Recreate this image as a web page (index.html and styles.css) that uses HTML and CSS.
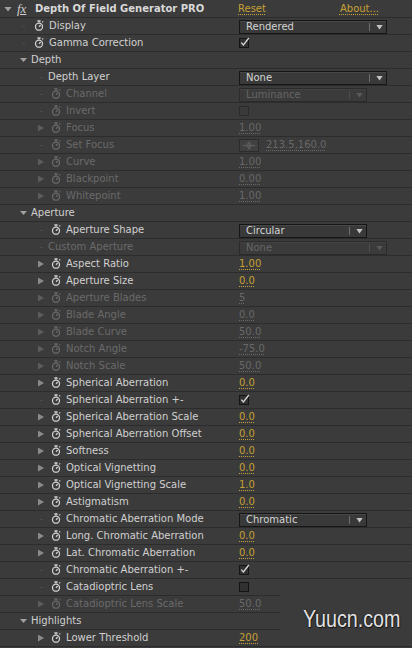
FILE: index.html
```html
<!DOCTYPE html>
<html>
<head>
<meta charset="utf-8">
<link rel="stylesheet" href="styles.css">
</head>
<body>
<div class="panel">
  <div class="row l0">
    <div class="name"><span class="tw"><i class="td"></i></span><span class="fx">fx</span><span class="title">Depth Of Field Generator PRO</span></div>
    <div class="val"><span class="link reset">Reset</span><span class="link about">About...</span></div>
  </div>
  <div class="row l1">
    <div class="name"><span class="tw"><i class="ds"></i></span><span class="sw"><svg class="ic" width="10" height="11" viewBox="0 0 10 11"><path d="M3.4 1h3.2M5 1v1.6M8.2 2.4l1-1"/><circle cx="5" cy="6.7" r="3.5"/><path d="M5 6.7l1.7-1.7"/></svg></span><span class="lbl">Display</span></div>
    <div class="val"><div class="dd"><span class="t">Rendered</span><i class="sep"></i><i class="arr"></i></div></div>
  </div>
  <div class="row l1">
    <div class="name"><span class="tw"><i class="ds"></i></span><span class="sw"><svg class="ic" width="10" height="11" viewBox="0 0 10 11"><path d="M3.4 1h3.2M5 1v1.6M8.2 2.4l1-1"/><circle cx="5" cy="6.7" r="3.5"/><path d="M5 6.7l1.7-1.7"/></svg></span><span class="lbl">Gamma Correction</span></div>
    <div class="val"><svg class="cb" width="12" height="12" viewBox="0 0 12 12"><rect x="0.5" y="1.5" width="9" height="9"/><path d="M2.3 5.6 4.4 8 9.8 1"/></svg></div>
  </div>
  <div class="row grp">
    <div class="name"><span class="tw"><i class="td"></i></span><span class="lbl">Depth</span></div>
    <div class="val"></div>
  </div>
  <div class="row l2">
    <div class="name"><span class="tw"><i class="ds"></i></span><span class="lbl nosw">Depth Layer</span></div>
    <div class="val"><div class="dd"><span class="t">None</span><i class="sep"></i><i class="arr"></i></div></div>
  </div>
  <div class="row l2 dis">
    <div class="name"><span class="tw"><i class="ds"></i></span><span class="sw"><svg class="ic" width="10" height="11" viewBox="0 0 10 11"><path d="M3.4 1h3.2M5 1v1.6M8.2 2.4l1-1"/><circle cx="5" cy="6.7" r="3.5"/><path d="M5 6.7l1.7-1.7"/></svg></span><span class="lbl">Channel</span></div>
    <div class="val"><div class="dd n"><span class="t">Luminance</span><i class="sep"></i><i class="arr"></i></div></div>
  </div>
  <div class="row l2 dis">
    <div class="name"><span class="tw"><i class="ds"></i></span><span class="sw"><svg class="ic" width="10" height="11" viewBox="0 0 10 11"><path d="M3.4 1h3.2M5 1v1.6M8.2 2.4l1-1"/><circle cx="5" cy="6.7" r="3.5"/><path d="M5 6.7l1.7-1.7"/></svg></span><span class="lbl">Invert</span></div>
    <div class="val"><svg class="cb" width="12" height="12" viewBox="0 0 12 12"><rect x="0.5" y="1.5" width="9" height="9"/></svg></div>
  </div>
  <div class="row l2 dis">
    <div class="name"><span class="tw"><i class="tr"></i></span><span class="sw"><svg class="ic" width="10" height="11" viewBox="0 0 10 11"><path d="M3.4 1h3.2M5 1v1.6M8.2 2.4l1-1"/><circle cx="5" cy="6.7" r="3.5"/><path d="M5 6.7l1.7-1.7"/></svg></span><span class="lbl">Focus</span></div>
    <div class="val"><span class="num">1.00</span></div>
  </div>
  <div class="row l2 dis">
    <div class="name"><span class="tw"><i class="ds"></i></span><span class="sw"><svg class="ic" width="10" height="11" viewBox="0 0 10 11"><path d="M3.4 1h3.2M5 1v1.6M8.2 2.4l1-1"/><circle cx="5" cy="6.7" r="3.5"/><path d="M5 6.7l1.7-1.7"/></svg></span><span class="lbl">Set Focus</span></div>
    <div class="val"><span class="xb"><svg width="12" height="9" viewBox="0 0 12 9"><path d="M0 4.5h12M6 0v9"/><circle cx="6" cy="4.5" r="2.3"/></svg></span><span class="num pt">213.5,160.0</span></div>
  </div>
  <div class="row l2 dis">
    <div class="name"><span class="tw"><i class="tr"></i></span><span class="sw"><svg class="ic" width="10" height="11" viewBox="0 0 10 11"><path d="M3.4 1h3.2M5 1v1.6M8.2 2.4l1-1"/><circle cx="5" cy="6.7" r="3.5"/><path d="M5 6.7l1.7-1.7"/></svg></span><span class="lbl">Curve</span></div>
    <div class="val"><span class="num">1.00</span></div>
  </div>
  <div class="row l2 dis">
    <div class="name"><span class="tw"><i class="tr"></i></span><span class="sw"><svg class="ic" width="10" height="11" viewBox="0 0 10 11"><path d="M3.4 1h3.2M5 1v1.6M8.2 2.4l1-1"/><circle cx="5" cy="6.7" r="3.5"/><path d="M5 6.7l1.7-1.7"/></svg></span><span class="lbl">Blackpoint</span></div>
    <div class="val"><span class="num">0.00</span></div>
  </div>
  <div class="row l2 dis">
    <div class="name"><span class="tw"><i class="tr"></i></span><span class="sw"><svg class="ic" width="10" height="11" viewBox="0 0 10 11"><path d="M3.4 1h3.2M5 1v1.6M8.2 2.4l1-1"/><circle cx="5" cy="6.7" r="3.5"/><path d="M5 6.7l1.7-1.7"/></svg></span><span class="lbl">Whitepoint</span></div>
    <div class="val"><span class="num">1.00</span></div>
  </div>
  <div class="row grp">
    <div class="name"><span class="tw"><i class="td"></i></span><span class="lbl">Aperture</span></div>
    <div class="val"></div>
  </div>
  <div class="row l2">
    <div class="name"><span class="tw"><i class="ds"></i></span><span class="sw"><svg class="ic" width="10" height="11" viewBox="0 0 10 11"><path d="M3.4 1h3.2M5 1v1.6M8.2 2.4l1-1"/><circle cx="5" cy="6.7" r="3.5"/><path d="M5 6.7l1.7-1.7"/></svg></span><span class="lbl">Aperture Shape</span></div>
    <div class="val"><div class="dd n"><span class="t">Circular</span><i class="sep"></i><i class="arr"></i></div></div>
  </div>
  <div class="row l2 dis">
    <div class="name"><span class="tw"><i class="ds"></i></span><span class="lbl nosw">Custom Aperture</span></div>
    <div class="val"><div class="dd"><span class="t">None</span><i class="sep"></i><i class="arr"></i></div></div>
  </div>
  <div class="row l2">
    <div class="name"><span class="tw"><i class="tr"></i></span><span class="sw"><svg class="ic" width="10" height="11" viewBox="0 0 10 11"><path d="M3.4 1h3.2M5 1v1.6M8.2 2.4l1-1"/><circle cx="5" cy="6.7" r="3.5"/><path d="M5 6.7l1.7-1.7"/></svg></span><span class="lbl">Aspect Ratio</span></div>
    <div class="val"><span class="num">1.00</span></div>
  </div>
  <div class="row l2">
    <div class="name"><span class="tw"><i class="tr"></i></span><span class="sw"><svg class="ic" width="10" height="11" viewBox="0 0 10 11"><path d="M3.4 1h3.2M5 1v1.6M8.2 2.4l1-1"/><circle cx="5" cy="6.7" r="3.5"/><path d="M5 6.7l1.7-1.7"/></svg></span><span class="lbl">Aperture Size</span></div>
    <div class="val"><span class="num">0.0</span></div>
  </div>
  <div class="row l2 dis">
    <div class="name"><span class="tw"><i class="tr"></i></span><span class="sw"><svg class="ic" width="10" height="11" viewBox="0 0 10 11"><path d="M3.4 1h3.2M5 1v1.6M8.2 2.4l1-1"/><circle cx="5" cy="6.7" r="3.5"/><path d="M5 6.7l1.7-1.7"/></svg></span><span class="lbl">Aperture Blades</span></div>
    <div class="val"><span class="num">5</span></div>
  </div>
  <div class="row l2 dis">
    <div class="name"><span class="tw"><i class="tr"></i></span><span class="sw"><svg class="ic" width="10" height="11" viewBox="0 0 10 11"><path d="M3.4 1h3.2M5 1v1.6M8.2 2.4l1-1"/><circle cx="5" cy="6.7" r="3.5"/><path d="M5 6.7l1.7-1.7"/></svg></span><span class="lbl">Blade Angle</span></div>
    <div class="val"><span class="num">0.0</span></div>
  </div>
  <div class="row l2 dis">
    <div class="name"><span class="tw"><i class="tr"></i></span><span class="sw"><svg class="ic" width="10" height="11" viewBox="0 0 10 11"><path d="M3.4 1h3.2M5 1v1.6M8.2 2.4l1-1"/><circle cx="5" cy="6.7" r="3.5"/><path d="M5 6.7l1.7-1.7"/></svg></span><span class="lbl">Blade Curve</span></div>
    <div class="val"><span class="num">50.0</span></div>
  </div>
  <div class="row l2 dis">
    <div class="name"><span class="tw"><i class="tr"></i></span><span class="sw"><svg class="ic" width="10" height="11" viewBox="0 0 10 11"><path d="M3.4 1h3.2M5 1v1.6M8.2 2.4l1-1"/><circle cx="5" cy="6.7" r="3.5"/><path d="M5 6.7l1.7-1.7"/></svg></span><span class="lbl">Notch Angle</span></div>
    <div class="val"><span class="num">-75.0</span></div>
  </div>
  <div class="row l2 dis">
    <div class="name"><span class="tw"><i class="tr"></i></span><span class="sw"><svg class="ic" width="10" height="11" viewBox="0 0 10 11"><path d="M3.4 1h3.2M5 1v1.6M8.2 2.4l1-1"/><circle cx="5" cy="6.7" r="3.5"/><path d="M5 6.7l1.7-1.7"/></svg></span><span class="lbl">Notch Scale</span></div>
    <div class="val"><span class="num">50.0</span></div>
  </div>
  <div class="row l2">
    <div class="name"><span class="tw"><i class="tr"></i></span><span class="sw"><svg class="ic" width="10" height="11" viewBox="0 0 10 11"><path d="M3.4 1h3.2M5 1v1.6M8.2 2.4l1-1"/><circle cx="5" cy="6.7" r="3.5"/><path d="M5 6.7l1.7-1.7"/></svg></span><span class="lbl">Spherical Aberration</span></div>
    <div class="val"><span class="num">0.0</span></div>
  </div>
  <div class="row l2">
    <div class="name"><span class="tw"><i class="ds"></i></span><span class="sw"><svg class="ic" width="10" height="11" viewBox="0 0 10 11"><path d="M3.4 1h3.2M5 1v1.6M8.2 2.4l1-1"/><circle cx="5" cy="6.7" r="3.5"/><path d="M5 6.7l1.7-1.7"/></svg></span><span class="lbl">Spherical Aberration +-</span></div>
    <div class="val"><svg class="cb" width="12" height="12" viewBox="0 0 12 12"><rect x="0.5" y="1.5" width="9" height="9"/><path d="M2.3 5.6 4.4 8 9.8 1"/></svg></div>
  </div>
  <div class="row l2">
    <div class="name"><span class="tw"><i class="tr"></i></span><span class="sw"><svg class="ic" width="10" height="11" viewBox="0 0 10 11"><path d="M3.4 1h3.2M5 1v1.6M8.2 2.4l1-1"/><circle cx="5" cy="6.7" r="3.5"/><path d="M5 6.7l1.7-1.7"/></svg></span><span class="lbl">Spherical Aberration Scale</span></div>
    <div class="val"><span class="num">0.0</span></div>
  </div>
  <div class="row l2">
    <div class="name"><span class="tw"><i class="tr"></i></span><span class="sw"><svg class="ic" width="10" height="11" viewBox="0 0 10 11"><path d="M3.4 1h3.2M5 1v1.6M8.2 2.4l1-1"/><circle cx="5" cy="6.7" r="3.5"/><path d="M5 6.7l1.7-1.7"/></svg></span><span class="lbl">Spherical Aberration Offset</span></div>
    <div class="val"><span class="num">0.0</span></div>
  </div>
  <div class="row l2">
    <div class="name"><span class="tw"><i class="tr"></i></span><span class="sw"><svg class="ic" width="10" height="11" viewBox="0 0 10 11"><path d="M3.4 1h3.2M5 1v1.6M8.2 2.4l1-1"/><circle cx="5" cy="6.7" r="3.5"/><path d="M5 6.7l1.7-1.7"/></svg></span><span class="lbl">Softness</span></div>
    <div class="val"><span class="num">0.0</span></div>
  </div>
  <div class="row l2">
    <div class="name"><span class="tw"><i class="tr"></i></span><span class="sw"><svg class="ic" width="10" height="11" viewBox="0 0 10 11"><path d="M3.4 1h3.2M5 1v1.6M8.2 2.4l1-1"/><circle cx="5" cy="6.7" r="3.5"/><path d="M5 6.7l1.7-1.7"/></svg></span><span class="lbl">Optical Vignetting</span></div>
    <div class="val"><span class="num">0.0</span></div>
  </div>
  <div class="row l2">
    <div class="name"><span class="tw"><i class="tr"></i></span><span class="sw"><svg class="ic" width="10" height="11" viewBox="0 0 10 11"><path d="M3.4 1h3.2M5 1v1.6M8.2 2.4l1-1"/><circle cx="5" cy="6.7" r="3.5"/><path d="M5 6.7l1.7-1.7"/></svg></span><span class="lbl">Optical Vignetting Scale</span></div>
    <div class="val"><span class="num">1.0</span></div>
  </div>
  <div class="row l2">
    <div class="name"><span class="tw"><i class="tr"></i></span><span class="sw"><svg class="ic" width="10" height="11" viewBox="0 0 10 11"><path d="M3.4 1h3.2M5 1v1.6M8.2 2.4l1-1"/><circle cx="5" cy="6.7" r="3.5"/><path d="M5 6.7l1.7-1.7"/></svg></span><span class="lbl">Astigmatism</span></div>
    <div class="val"><span class="num">0.0</span></div>
  </div>
  <div class="row l2">
    <div class="name"><span class="tw"><i class="ds"></i></span><span class="sw"><svg class="ic" width="10" height="11" viewBox="0 0 10 11"><path d="M3.4 1h3.2M5 1v1.6M8.2 2.4l1-1"/><circle cx="5" cy="6.7" r="3.5"/><path d="M5 6.7l1.7-1.7"/></svg></span><span class="lbl">Chromatic Aberration Mode</span></div>
    <div class="val"><div class="dd n"><span class="t">Chromatic</span><i class="sep"></i><i class="arr"></i></div></div>
  </div>
  <div class="row l2">
    <div class="name"><span class="tw"><i class="tr"></i></span><span class="sw"><svg class="ic" width="10" height="11" viewBox="0 0 10 11"><path d="M3.4 1h3.2M5 1v1.6M8.2 2.4l1-1"/><circle cx="5" cy="6.7" r="3.5"/><path d="M5 6.7l1.7-1.7"/></svg></span><span class="lbl">Long. Chromatic Aberration</span></div>
    <div class="val"><span class="num">0.0</span></div>
  </div>
  <div class="row l2">
    <div class="name"><span class="tw"><i class="tr"></i></span><span class="sw"><svg class="ic" width="10" height="11" viewBox="0 0 10 11"><path d="M3.4 1h3.2M5 1v1.6M8.2 2.4l1-1"/><circle cx="5" cy="6.7" r="3.5"/><path d="M5 6.7l1.7-1.7"/></svg></span><span class="lbl">Lat. Chromatic Aberration</span></div>
    <div class="val"><span class="num">0.0</span></div>
  </div>
  <div class="row l2">
    <div class="name"><span class="tw"><i class="ds"></i></span><span class="sw"><svg class="ic" width="10" height="11" viewBox="0 0 10 11"><path d="M3.4 1h3.2M5 1v1.6M8.2 2.4l1-1"/><circle cx="5" cy="6.7" r="3.5"/><path d="M5 6.7l1.7-1.7"/></svg></span><span class="lbl">Chromatic Aberration +-</span></div>
    <div class="val"><svg class="cb" width="12" height="12" viewBox="0 0 12 12"><rect x="0.5" y="1.5" width="9" height="9"/><path d="M2.3 5.6 4.4 8 9.8 1"/></svg></div>
  </div>
  <div class="row l2">
    <div class="name"><span class="tw"><i class="ds"></i></span><span class="sw"><svg class="ic" width="10" height="11" viewBox="0 0 10 11"><path d="M3.4 1h3.2M5 1v1.6M8.2 2.4l1-1"/><circle cx="5" cy="6.7" r="3.5"/><path d="M5 6.7l1.7-1.7"/></svg></span><span class="lbl">Catadioptric Lens</span></div>
    <div class="val"><svg class="cb" width="12" height="12" viewBox="0 0 12 12"><rect x="0.5" y="1.5" width="9" height="9"/></svg></div>
  </div>
  <div class="row l2 dis">
    <div class="name"><span class="tw"><i class="tr"></i></span><span class="sw"><svg class="ic" width="10" height="11" viewBox="0 0 10 11"><path d="M3.4 1h3.2M5 1v1.6M8.2 2.4l1-1"/><circle cx="5" cy="6.7" r="3.5"/><path d="M5 6.7l1.7-1.7"/></svg></span><span class="lbl">Catadioptric Lens Scale</span></div>
    <div class="val"><span class="num">50.0</span></div>
  </div>
  <div class="row grp">
    <div class="name"><span class="tw"><i class="td"></i></span><span class="lbl">Highlights</span></div>
    <div class="val"></div>
  </div>
  <div class="row l2">
    <div class="name"><span class="tw"><i class="tr"></i></span><span class="sw"><svg class="ic" width="10" height="11" viewBox="0 0 10 11"><path d="M3.4 1h3.2M5 1v1.6M8.2 2.4l1-1"/><circle cx="5" cy="6.7" r="3.5"/><path d="M5 6.7l1.7-1.7"/></svg></span><span class="lbl">Lower Threshold</span></div>
    <div class="val"><span class="num">200</span></div>
  </div>
</div>
<div class="wm"><span>Yuucn.com</span></div>
</body>
</html>
```

FILE: styles.css
```css
html, body {
  margin: 0;
  padding: 0;
}
body {
  background: #3b3b3b;
  font-family: "DejaVu Sans", "Noto Sans", sans-serif;
  font-size: 10px;
  color: #d0d0d0;
  width: 412px;
  height: 648px;
  overflow: hidden;
  position: relative;
}
.panel {
  display: flex;
  flex-direction: column;
  padding-top: 1px;
}
.row {
  display: grid;
  grid-template-columns: 239px 1fr;
  height: 17px;
  box-sizing: border-box;
  border-bottom: 1px solid #2c2c2c;
  line-height: 16px;
  white-space: nowrap;
}
.name {
  display: flex;
  align-items: center;
  height: 16px;
  overflow: hidden;
}
.val {
  display: flex;
  align-items: center;
  height: 16px;
}
.l0 .name { padding-left: 4px; }
.l1 .name { padding-left: 19px; }
.grp .name { padding-left: 19px; }
.l2 .name { padding-left: 36px; }

.tw {
  width: 14px;
  height: 16px;
  flex: none;
  display: flex;
  align-items: center;
}
.l0 .tw { width: 13px; }
.grp .tw { width: 12px; }

.tr {
  display: block;
  width: 6px;
  height: 7px;
  margin-left: 2px;
  background: #8a8a8a;
  clip-path: polygon(0 0, 100% 50%, 0 100%);
}
.td {
  display: block;
  width: 7px;
  height: 4px;
  margin-left: 1px;
  background: #a0a0a0;
  clip-path: polygon(0 0, 100% 0, 50% 100%);
}
.l0 .td { width: 8px; height: 5px; margin-left: 0; }
.ds {
  display: block;
  width: 3px;
  height: 1px;
  margin-left: 4px;
  background: #4b4b4b;
}
.l1 .ds { margin-left: 3px; }

.sw {
  width: 16px;
  flex: none;
  display: flex;
  align-items: center;
}
.ic {
  margin-left: 1px;
  margin-top: -2px;
  fill: none;
  stroke: currentColor;
  stroke-width: 1.3;
}
.lbl.nosw { margin-left: -2px; }

.fx {
  width: 18px;
  flex: none;
  font-family: "Liberation Serif", serif;
  font-style: italic;
  font-size: 13px;
  text-decoration: underline;
  color: #cfcfcf;
  line-height: 14px;
}
.title {
  font-weight: bold;
  color: #d8d8d8;
}
.link {
  color: #c6a034;
  text-decoration: underline dotted;
  text-underline-offset: 2px;
  line-height: 12px;
}
.reset { margin-left: -1px; }
.about { margin-left: 74px; }

.dis { color: #6a6a6a; }
.dis .tr { background: #5c5c5c; }

.num {
  color: #c6a034;
  text-decoration: underline dotted;
  text-underline-offset: 2px;
  line-height: 12px;
}
.dis .num { color: #686868; }

.dd {
  box-sizing: border-box;
  height: 14px;
  width: 148px;
  border: 1px solid #161616;
  background: #393939;
  box-shadow: inset 0 1px 0 #474747;
  display: flex;
  align-items: center;
  color: #d4d4d4;
  align-self: flex-start;
  margin-top: 2px;
}
.dd.n { width: 128px; }
.dd .t {
  flex: 1;
  padding-left: 6px;
  line-height: 12px;
}
.dd .sep {
  display: block;
  width: 1px;
  height: 8px;
  background: #6e6e6e;
}
.dd .arr {
  display: block;
  width: 7px;
  height: 5px;
  margin: 0 3px 0 6px;
  background: #c4c4c4;
  clip-path: polygon(0 0, 100% 0, 50% 100%);
}
.dis .dd {
  border-color: #2b2b2b;
  background: #3b3b3b;
  box-shadow: inset 0 1px 0 #424242;
  color: #666666;
}
.dis .dd .sep { background: #4e4e4e; }
.dis .dd .arr { background: #5a5a5a; }

.cb rect {
  fill: #313131;
  stroke: #141414;
}
.cb path {
  fill: none;
  stroke: #d6d6d6;
  stroke-width: 1.3;
}
.dis .cb rect {
  fill: #3a3a3a;
  stroke: #2b2b2b;
}

.xb {
  box-sizing: border-box;
  width: 20px;
  height: 13px;
  border: 1px solid #2b2b2b;
  background: #404040;
  display: flex;
  align-items: center;
  justify-content: center;
}
.xb svg {
  fill: none;
  stroke: #5e5e5e;
  stroke-width: 1;
}
.num.pt { margin-left: 7px; }

.wm {
  position: absolute;
  left: 280px;
  top: 593px;
  width: 132px;
  height: 37px;
  background: #3b3b3b;
}
.wm span {
  position: absolute;
  left: 23px;
  top: 14px;
  font-family: "Liberation Sans", sans-serif;
  font-size: 24px;
  line-height: 24px;
  color: #e2e2e2;
  transform: scaleX(0.82);
  transform-origin: left center;
  text-shadow: 1px 1px 1px #111, -1px 0 1px #222;
  white-space: nowrap;
}
```
